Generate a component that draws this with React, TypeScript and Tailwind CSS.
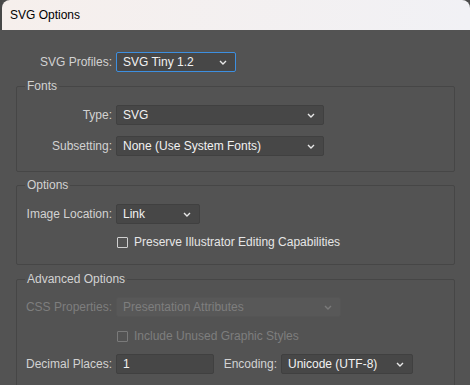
import React from 'react';

const font = { fontFamily: '"Liberation Sans", Arial, sans-serif' };

const Chevron = ({ dim }: { dim?: boolean }) => (
  <svg width="8" height="5" viewBox="0 0 8 5" className="shrink-0">
    <path d="M1 1 L4 4 L7 1" fill="none" stroke={dim ? '#7a7a7a' : '#e8e8e8'} strokeWidth="1.4" />
  </svg>
);

interface SelectProps {
  value: string;
  width: string;
  active?: boolean;
  disabled?: boolean;
}

const Select = ({ value, width, active, disabled }: SelectProps) => (
  <div
    className={`${width} h-5 flex items-center justify-between pl-[6px] pr-[8px] rounded-[2px] border ${
      active
        ? 'border-[#3d8fe0] bg-[#474747]'
        : disabled
          ? 'border-[#555555] bg-[#585858]'
          : 'border-[#404040] bg-[#474747]'
    }`}
  >
    <span className={`text-[12px] ${disabled ? 'text-[#7e7e7e]' : 'text-[#f2f2f2]'}`}>{value}</span>
    <Chevron dim={disabled} />
  </div>
);

const Label = ({ children, w, disabled }: { children: React.ReactNode; w: string; disabled?: boolean }) => (
  <div className={`${w} shrink-0 text-right pr-1 text-[12px] ${disabled ? 'text-[#7e7e7e]' : 'text-[#d2d2d2]'}`}>
    {children}
  </div>
);

const Check = ({ label, disabled }: { label: string; disabled?: boolean }) => (
  <div className="h-5 flex items-center pl-[100px]">
    <div
      className={`w-[11px] h-[11px] rounded-[1px] border ${disabled ? 'border-[#7a7a7a]' : 'border-[#cfcfcf]'}`}
    />
    <span className={`ml-[6px] text-[12px] ${disabled ? 'text-[#7e7e7e]' : 'text-[#e6e6e6]'}`}>{label}</span>
  </div>
);

const Group = ({ title, children, className }: { title: string; children: React.ReactNode; className?: string }) => (
  <div className={`relative mx-[16px] mr-[15px] border border-[#464646] rounded-[2px] ${className ?? ''}`}>
    <span className="absolute left-[8px] -top-[9px] px-[2px] bg-[#535353] text-[12px] text-[#d2d2d2] leading-4">
      {title}
    </span>
    {children}
  </div>
);

export default function App() {
  return (
    <div className="w-[470px] h-[385px] overflow-hidden bg-[#4b4b4b] flex flex-col" style={font}>
      <div className="h-px bg-[#4b4b4b]" />
      <div className="flex flex-1">
        <div className="w-[2px] bg-[#474747]" />
        <div className="flex-1 flex flex-col">
          <div className="h-[30px] flex items-center pl-[8px] rounded-t-[8px] bg-gradient-to-r from-[#f6efec] to-[#f1f1f5]">
            <span className="text-[12px] text-black">SVG Options</span>
          </div>
          <div className="flex-1 bg-[#535353] -ml-[2px] pt-[22px]">
            <div className="flex items-center">
              <Label w="w-[116px]">SVG Profiles:</Label>
              <Select value="SVG Tiny 1.2" width="w-[120px]" active />
            </div>

            <Group title="Fonts" className="mt-[14px] pt-[18px] pb-[15px]">
              <div className="flex items-center">
                <Label w="w-[99px]">Type:</Label>
                <Select value="SVG" width="w-[208px]" />
              </div>
              <div className="flex items-center mt-[11px]">
                <Label w="w-[99px]">Subsetting:</Label>
                <Select value="None (Use System Fonts)" width="w-[208px]" />
              </div>
            </Group>

            <Group title="Options" className="mt-[13px] pt-[18px] pb-[12px]">
              <div className="flex items-center">
                <Label w="w-[99px]">Image Location:</Label>
                <Select value="Link" width="w-[84px]" />
              </div>
              <div className="mt-[8px]">
                <Check label="Preserve Illustrator Editing Capabilities" />
              </div>
            </Group>

            <Group title="Advanced Options" className="mt-[14px] pt-[17px] pb-[12px]">
              <div className="flex items-center">
                <Label w="w-[99px]" disabled>
                  CSS Properties:
                </Label>
                <Select value="Presentation Attributes" width="w-[225px]" disabled />
              </div>
              <div className="mt-[9px]">
                <Check label="Include Unused Graphic Styles" disabled />
              </div>
              <div className="flex items-center mt-[8px]">
                <Label w="w-[99px]">Decimal Places:</Label>
                <div className="w-[98px] h-5 flex items-center pl-[6px] rounded-[2px] border border-[#404040] bg-[#474747]">
                  <span className="text-[12px] text-[#f2f2f2]">1</span>
                </div>
                <Label w="w-[67px]">Encoding:</Label>
                <Select value="Unicode (UTF-8)" width="w-[132px]" />
              </div>
            </Group>
          </div>
        </div>
      </div>
    </div>
  );
}
